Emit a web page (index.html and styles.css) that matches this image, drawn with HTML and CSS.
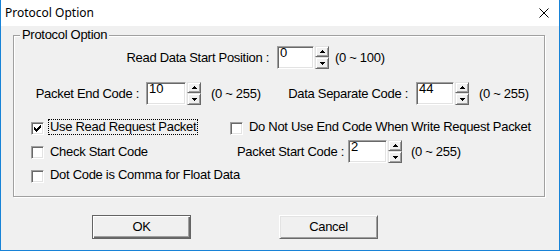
FILE: index.html
```html
<!DOCTYPE html>
<html>
<head>
<meta charset="utf-8">
<link rel="stylesheet" href="styles.css">
</head>
<body>
<div class="window">
  <div class="titlebar">
    <span class="title">Protocol Option</span>
    <svg class="close" width="10" height="10" viewBox="0 0 10 10"><path d="M0.5 0.5 L9.5 9.5 M9.5 0.5 L0.5 9.5" stroke="#000" stroke-width="1" fill="none"/></svg>
  </div>
  <div class="content">
    <div class="group">
      <span class="legend">Protocol Option</span>

      <div class="row row-a">
        <span class="lbl w-read">Read Data Start Position :</span>
        <span class="edit e-read">0</span>
        <span class="spin">
          <span class="sbtn up"><svg width="5" height="3" viewBox="0 0 5 3"><rect x="2" y="0" width="1" height="1"/><rect x="1" y="1" width="3" height="1"/><rect x="0" y="2" width="5" height="1"/></svg></span>
          <span class="sbtn down"><svg width="5" height="3" viewBox="0 0 5 3"><rect x="0" y="0" width="5" height="1"/><rect x="1" y="1" width="3" height="1"/><rect x="2" y="2" width="1" height="1"/></svg></span>
        </span>
        <span class="range rg-read">(0 ~ 100)</span>
      </div>

      <div class="row row-b">
        <span class="lbl w-end">Packet End Code :</span>
        <span class="edit e-end">10</span>
        <span class="spin">
          <span class="sbtn up"><svg width="5" height="3" viewBox="0 0 5 3"><rect x="2" y="0" width="1" height="1"/><rect x="1" y="1" width="3" height="1"/><rect x="0" y="2" width="5" height="1"/></svg></span>
          <span class="sbtn down"><svg width="5" height="3" viewBox="0 0 5 3"><rect x="0" y="0" width="5" height="1"/><rect x="1" y="1" width="3" height="1"/><rect x="2" y="2" width="1" height="1"/></svg></span>
        </span>
        <span class="range rg-end">(0 ~ 255)</span>
        <span class="lbl w-sep">Data Separate Code :</span>
        <span class="edit e-sep">44</span>
        <span class="spin">
          <span class="sbtn up"><svg width="5" height="3" viewBox="0 0 5 3"><rect x="2" y="0" width="1" height="1"/><rect x="1" y="1" width="3" height="1"/><rect x="0" y="2" width="5" height="1"/></svg></span>
          <span class="sbtn down"><svg width="5" height="3" viewBox="0 0 5 3"><rect x="0" y="0" width="5" height="1"/><rect x="1" y="1" width="3" height="1"/><rect x="2" y="2" width="1" height="1"/></svg></span>
        </span>
        <span class="range rg-sep">(0 ~ 255)</span>
      </div>

      <div class="row row-c">
        <span class="check-item col1">
          <span class="cbox"><svg width="7" height="7" viewBox="0 0 7 7" shape-rendering="crispEdges"><rect x="6" y="0" width="1" height="1"/><rect x="5" y="1" width="2" height="1"/><rect x="0" y="2" width="1" height="1"/><rect x="4" y="2" width="3" height="1"/><rect x="0" y="3" width="2" height="1"/><rect x="3" y="3" width="3" height="1"/><rect x="0" y="4" width="5" height="1"/><rect x="1" y="5" width="3" height="1"/><rect x="2" y="6" width="1" height="1"/></svg></span>
          <span class="clabel focus">Use Read Request Packet</span>
        </span>
        <span class="check-item">
          <span class="cbox"></span>
          <span class="clabel">Do Not Use End Code When Write Request Packet</span>
        </span>
      </div>

      <div class="row row-d">
        <span class="check-item col1">
          <span class="cbox"></span>
          <span class="clabel">Check Start Code</span>
        </span>
        <span class="lbl w-start">Packet Start Code :</span>
        <span class="edit e-start">2</span>
        <span class="spin">
          <span class="sbtn up"><svg width="5" height="3" viewBox="0 0 5 3"><rect x="2" y="0" width="1" height="1"/><rect x="1" y="1" width="3" height="1"/><rect x="0" y="2" width="5" height="1"/></svg></span>
          <span class="sbtn down"><svg width="5" height="3" viewBox="0 0 5 3"><rect x="0" y="0" width="5" height="1"/><rect x="1" y="1" width="3" height="1"/><rect x="2" y="2" width="1" height="1"/></svg></span>
        </span>
        <span class="range rg-start">(0 ~ 255)</span>
      </div>

      <div class="row row-e">
        <span class="check-item col1">
          <span class="cbox"></span>
          <span class="clabel">Dot Code is Comma for Float Data</span>
        </span>
      </div>
    </div>

    <div class="buttons">
      <span class="btn btn-default">OK</span>
      <span class="btn btn-cancel">Cancel</span>
    </div>
  </div>
</div>
</body>
</html>
```

FILE: styles.css
```css
html, body {
  margin: 0;
  padding: 0;
  background: #f0f0f0;
}

.window {
  width: 560px;
  height: 251px;
  box-sizing: border-box;
  border: 1px solid #1883d7;
  border-top: 0;
  display: flex;
  flex-direction: column;
  font-family: "Liberation Sans", Arial, sans-serif;
  font-size: 13px;
  letter-spacing: -0.3px;
  color: #000;
}

.titlebar {
  height: 26px;
  flex: none;
  background: #fff;
  display: flex;
  align-items: center;
  justify-content: space-between;
  padding: 0 10px 0 4px;
}

.title {
  font-family: "Noto Sans", "Open Sans", sans-serif;
  font-size: 12px;
  letter-spacing: 0;
  line-height: 16px;
}

.close {
  display: block;
}

.content {
  flex: 1;
  background: #f0f0f0;
  display: flex;
  flex-direction: column;
}

.group {
  position: relative;
  margin: 9px 0 0 12px;
  width: 532px;
  height: 162px;
  box-sizing: border-box;
  border: 1px solid #a0a0a0;
  box-shadow: inset 1px 1px 0 #fff, 1px 1px 0 #fff;
  padding-top: 10px;
  display: flex;
  flex-direction: column;
}

.legend {
  position: absolute;
  left: 6px;
  top: -8px;
  padding: 0 2px;
  line-height: 13px;
  background: #f0f0f0;
}

.row {
  display: flex;
  align-items: center;
  line-height: 14px;
  white-space: nowrap;
}

.row-a { height: 23px; }
.row-b { height: 23px; margin-top: 13px; }
.row-c { height: 16px; margin-top: 14px; padding-left: 17px; }
.row-d { height: 23px; margin-top: 5px; padding-left: 17px; }
.row-e { height: 16px; margin-top: 4px; padding-left: 17px; }

.lbl {
  display: inline-block;
  text-align: right;
  flex: none;
}

.w-read { width: 255px; }
.w-end { width: 125px; }
.w-sep { width: 137px; }
.w-start { width: 114px; }

.edit {
  flex: none;
  height: 23px;
  box-sizing: border-box;
  background: #fff;
  border: 1px solid;
  border-color: #a0a0a0 #fff #fff #a0a0a0;
  box-shadow: inset 1px 1px 0 #696969, inset -1px -1px 0 #e3e3e3;
  padding: 0 2px;
  line-height: 12px;
  letter-spacing: 0;
}

.e-read { width: 37px; margin-left: 8px; }
.e-end { width: 40px; margin-left: 7px; }
.e-sep { width: 38px; margin-left: 8px; }
.e-start { width: 39px; margin-left: 4px; }

.spin {
  flex: none;
  width: 14px;
  height: 23px;
  margin-left: 1px;
  display: flex;
  flex-direction: column;
}

.sbtn {
  box-sizing: border-box;
  border: 1px solid;
  border-color: #e3e3e3 #696969 #696969 #e3e3e3;
  box-shadow: inset 1px 1px 0 #fff, inset -1px -1px 0 #a0a0a0;
  background: #f0f0f0;
  display: flex;
  align-items: center;
  justify-content: center;
}

.sbtn.up { height: 11px; }
.sbtn.down { height: 12px; }

.sbtn svg {
  display: block;
  fill: #000;
}

.range {
  flex: none;
  display: inline-block;
}

.rg-read { margin-left: 6px; }
.rg-end { margin-left: 10px; width: 60px; }
.rg-sep { margin-left: 10px; }
.rg-start { margin-left: 9px; }

.check-item {
  display: flex;
  align-items: center;
  flex: none;
}

.col1 { width: 199px; }

.cbox {
  flex: none;
  width: 13px;
  height: 13px;
  margin-top: 2px;
  box-sizing: border-box;
  background: #fff;
  border: 1px solid;
  border-color: #a0a0a0 #fff #fff #a0a0a0;
  box-shadow: inset 1px 1px 0 #696969, inset -1px -1px 0 #e3e3e3;
  display: flex;
  align-items: center;
  justify-content: center;
}

.cbox svg {
  display: block;
  fill: #000;
}

.clabel {
  margin-left: 4px;
  padding: 0 1px;
  border: 1px dotted transparent;
  line-height: 14px;
}

.clabel.focus {
  border-color: #000;
}

.buttons {
  display: flex;
  margin-top: 18px;
  padding-left: 91px;
  gap: 88px;
}

.btn {
  width: 99px;
  height: 24px;
  box-sizing: border-box;
  background: #f0f0f0;
  display: flex;
  align-items: center;
  justify-content: center;
  line-height: 14px;
}

.btn-default {
  border: 1px solid #646464;
  box-shadow: inset 1px 1px 0 #fff, inset -1px -1px 0 #696969, inset -2px -2px 0 #a0a0a0;
}

.btn-cancel {
  border: 1px solid;
  border-color: #fff #696969 #696969 #fff;
  box-shadow: inset 1px 1px 0 #e3e3e3, inset -1px -1px 0 #a0a0a0;
}
```
